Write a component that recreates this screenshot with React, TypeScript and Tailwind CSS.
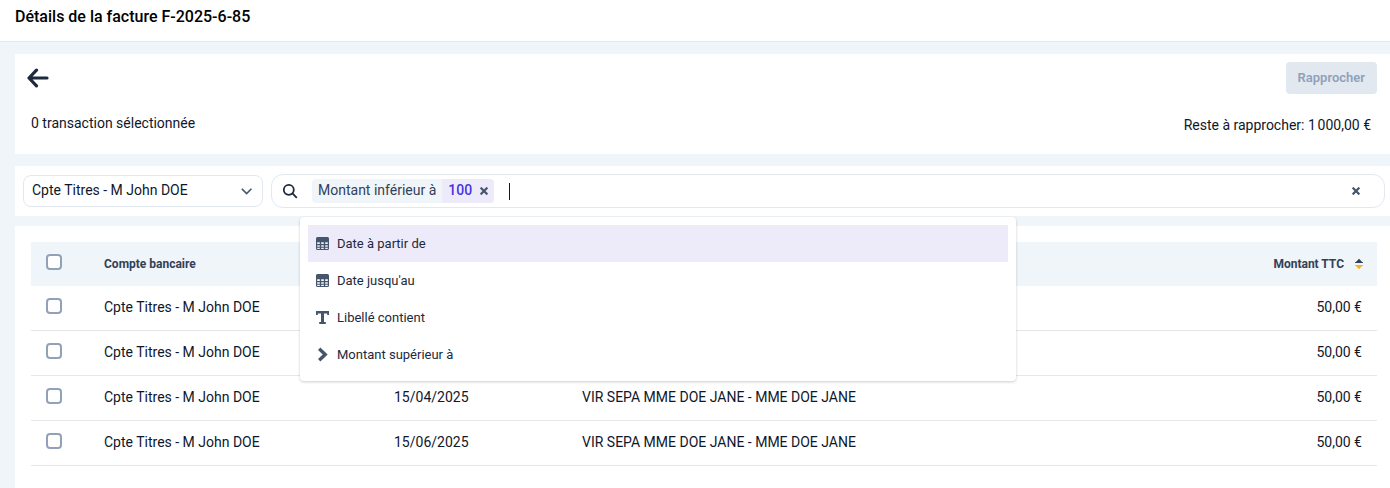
type Transaction = {
  id: number;
  account: string;
  date: string;
  label: string;
  amount: string;
};

const transactions: Transaction[] = [
  { id: 1, account: "Cpte Titres - M John DOE", date: "", label: "", amount: "50,00 €" },
  { id: 2, account: "Cpte Titres - M John DOE", date: "", label: "", amount: "50,00 €" },
  {
    id: 3,
    account: "Cpte Titres - M John DOE",
    date: "15/04/2025",
    label: "VIR SEPA MME DOE JANE - MME DOE JANE",
    amount: "50,00 €",
  },
  {
    id: 4,
    account: "Cpte Titres - M John DOE",
    date: "15/06/2025",
    label: "VIR SEPA MME DOE JANE - MME DOE JANE",
    amount: "50,00 €",
  },
];

function ArrowLeftIcon() {
  return (
    <svg
      viewBox="0 0 22 20"
      className="h-5 w-[22px]"
      fill="none"
      stroke="currentColor"
      strokeWidth="3.200"
      strokeLinecap="round"
      strokeLinejoin="round"
      aria-hidden="true"
    >
      <path d="M9.500 2.200 2 10l7.500 7.800M2.500 10H20" />
    </svg>
  );
}

function CalendarIcon() {
  return (
    <svg viewBox="0 0 13 13" className="h-[13px] w-[13px]" fill="currentColor" aria-hidden="true">
      <path
        fillRule="evenodd"
        d="M1.500 0h10A1.500 1.500 0 0 1 13 1.500v10a1.500 1.500 0 0 1-1.500 1.500h-10A1.500 1.500 0 0 1 0 11.500v-10A1.500 1.500 0 0 1 1.500 0zM1.200 5.200v1.900h2.600V5.200zm4 0v1.900h2.600V5.200zm4 0v1.900h2.600V5.200zM1.200 8.200V9.800h2.600V8.200zm4 0V9.800h2.600V8.200zm4 0V9.800h2.600V8.200zM1.200 10.800V12h2.600v-1.200zm4 0V12h2.600v-1.200zm4 0V12h2.600v-1.200z"
      />
    </svg>
  );
}

function TextIcon() {
  return (
    <svg viewBox="0 0 13 13" className="h-[13px] w-[13px]" fill="currentColor" aria-hidden="true">
      <path d="M0 0h13v4h-1.800V2.400H8V11h1.800v2H3.200v-2H5V2.400H1.800V4H0z" />
    </svg>
  );
}

function ChevronIcon() {
  return (
    <svg
      viewBox="0 0 13 15"
      className="h-[15px] w-[13px]"
      fill="none"
      stroke="currentColor"
      strokeWidth="3.400"
      aria-hidden="true"
    >
      <path d="M3.200 1.800 9.200 7.500 3.200 13.200" />
    </svg>
  );
}

function CrossIcon() {
  return (
    <svg
      viewBox="0 0 8 8"
      className="h-2 w-2"
      fill="none"
      stroke="currentColor"
      strokeWidth="2.200"
      aria-hidden="true"
    >
      <path d="M.6.6 7.400 7.400M7.400.6.6 7.400" />
    </svg>
  );
}

function SearchIcon() {
  return (
    <svg
      viewBox="0 0 16 16"
      className="h-4 w-4"
      fill="none"
      stroke="currentColor"
      strokeWidth="1.800"
      aria-hidden="true"
    >
      <circle cx="6.800" cy="6.800" r="5" />
      <path d="M10.200 10.200 14.800 14.800" />
    </svg>
  );
}

function SortIcon() {
  return (
    <svg viewBox="0 0 8 12" className="h-3 w-2" aria-hidden="true">
      <path d="M4 .8 7.800 4.800H.2z" fill="#334155" />
      <path d="M4 11.200.2 7.200h7.600z" fill="#fbb11d" />
      <path d="M.2 4h7.600v1H.2z" fill="#334155" />
      <path d="M.2 7h7.600v1H.2z" fill="#fbb11d" />
    </svg>
  );
}

const filters = [
  { label: "Date à partir de", icon: <CalendarIcon /> },
  { label: "Date jusqu'au", icon: <CalendarIcon /> },
  { label: "Libellé contient", icon: <TextIcon /> },
  { label: "Montant supérieur à", icon: <ChevronIcon /> },
];

function Checkbox({ label }: { label: string }) {
  return (
    <input
      type="checkbox"
      aria-label={label}
      className="block h-4 w-4 appearance-none rounded border-2 border-slate-400 bg-white checked:bg-slate-400"
    />
  );
}

function SearchBar() {
  return (
    <div className="relative flex h-[34px] flex-1 items-center rounded-xl border border-slate-200 bg-white pl-2.5 pr-6">
      <span className="text-slate-800">
        <SearchIcon />
      </span>
      <div className="ml-3.5 flex h-6 items-center overflow-hidden rounded bg-[#f0f5f9] text-sm">
        <span className="px-1.5 pb-0.5 text-slate-700">Montant inférieur à</span>
        <span className="flex h-full items-center bg-[#edebfa] pl-1.5 font-medium text-[#4834e0]">
          <span className="pb-0.5">100</span>
          <button type="button" aria-label="Retirer le filtre" className="pl-2 pr-1.5 text-slate-600">
            <CrossIcon />
          </button>
        </span>
      </div>
      <input
        type="text"
        autoFocus
        aria-label="Rechercher"
        className="ml-[15px] h-6 min-w-0 flex-1 bg-transparent text-sm caret-transparent outline-none"
      />
      <span className="absolute left-[237px] h-[17px] w-px bg-slate-900" />
      <button type="button" aria-label="Effacer" className="text-slate-600">
        <CrossIcon />
      </button>

      <ul className="absolute left-7 top-[42px] z-10 w-[716px] max-w-full rounded-sm bg-white p-2 shadow-[0_1px_3px_rgba(0,0,0,0.2)]">
        {filters.map((filter, i) => (
          <li key={filter.label}>
            <button
              type="button"
              className={`flex h-[37px] w-full items-center gap-2 px-2 text-left text-[13px] text-slate-800 ${i === 0 ? "bg-[#edebfa]" : ""}`}
            >
              <span className="text-slate-600">{filter.icon}</span>
              <span className="pt-px">{filter.label}</span>
            </button>
          </li>
        ))}
      </ul>
    </div>
  );
}

export default function App() {
  return (
    <div className="min-h-screen bg-[#f0f5f9] font-[Roboto,sans-serif] text-sm text-slate-900">
      <header className="border-b border-slate-200 bg-white px-[15px] pb-3 pt-[5px]">
        <h1 className="text-base font-medium text-black">Détails de la facture F-2025-6-85</h1>
      </header>

      <main className="flex min-h-[calc(100vh-42px)] flex-col pl-[15px] pt-3">
        <section className="h-[100px] bg-white pl-3 pr-[13px] pt-2">
          <div className="flex items-center justify-between">
            <button type="button" aria-label="Retour" className="text-slate-800">
              <ArrowLeftIcon />
            </button>
            <button
              type="button"
              disabled
              className="h-8 rounded bg-slate-200 px-3 text-[13px] font-semibold text-slate-400"
            >
              Rapprocher
            </button>
          </div>
          <div className="flex justify-between pl-1 pr-1.5 pt-[19px]">
            <p>0 transaction sélectionnée</p>
            <p className="pt-0.5">Reste à rapprocher: 1{"\u202f"}000,00 €</p>
          </div>
        </section>

        <section className="mt-3 flex items-center gap-2 bg-white py-2 pl-2 pr-[5px]">
          <div className="relative w-60">
            <select
              aria-label="Compte bancaire"
              className="h-8 w-full appearance-none rounded-lg border border-slate-200 bg-white px-2 pb-0.5"
            >
              <option>Cpte Titres - M John DOE</option>
            </select>
            <svg
              viewBox="0 0 12 8"
              className="pointer-events-none absolute right-2.5 top-3 h-2 w-3 text-slate-600"
              fill="none"
              stroke="currentColor"
              strokeWidth="1.600"
              aria-hidden="true"
            >
              <path d="M.8 1.800 5.600 6.600 10.400 1.800" />
            </svg>
          </div>
          <SearchBar />
        </section>

        <section className="mt-2.5 flex-1 bg-white pl-4 pr-[13px] pt-4">
          <table className="w-full table-fixed border-separate border-spacing-0">
            <thead>
              <tr className="h-11 bg-[#f0f5f9] text-left text-xs text-slate-700">
                <th className="w-[58px] pb-1 pl-[15px]">
                  <Checkbox label="Tout sélectionner" />
                </th>
                <th className="w-[290px] pl-[15px] font-bold">Compte bancaire</th>
                <th className="w-[188px] pl-[15px]" />
                <th className="pl-[15px]" />
                <th className="w-[200px] pr-3.5 font-bold">
                  <button type="button" className="ml-auto flex items-center gap-[11px]">
                    Montant TTC
                    <SortIcon />
                  </button>
                </th>
              </tr>
            </thead>
            <tbody>
              {transactions.map((t) => (
                <tr key={t.id} className="h-[45px] *:border-b *:border-gray-200">
                  <td className="pb-1 pl-[15px]">
                    <Checkbox label={`Sélectionner la transaction ${t.id}`} />
                  </td>
                  <td className="pb-0.5 pl-[15px]">{t.account}</td>
                  <td className="pb-0.5 pl-[15px]">{t.date}</td>
                  <td className="pb-0.5 pl-[15px]">{t.label}</td>
                  <td className="pb-0.5 pr-[15px] text-right">{t.amount}</td>
                </tr>
              ))}
            </tbody>
          </table>
        </section>
      </main>
    </div>
  );
}
